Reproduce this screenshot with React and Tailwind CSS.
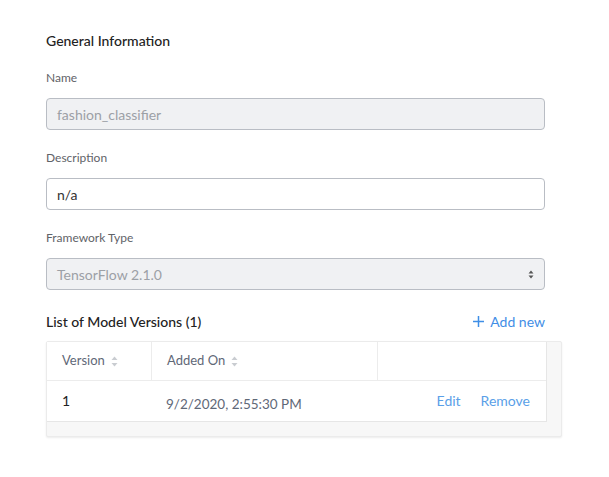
export default function App() {
  const label = "block text-[12px] text-[#5f6368] leading-[14px]";
  const box =
    "w-full h-8 rounded-[4px] border border-[#b9bdc4] px-[10px] text-[14px] flex items-center";

  const SortIcon = () => (
    <svg width="7" height="11" viewBox="0 0 7 11" className="ml-[6px]">
      <path d="M3.5 0.5 L6.5 4 H0.5 Z" fill="#c9ccd1" />
      <path d="M3.5 10.5 L6.5 7 H0.5 Z" fill="#c9ccd1" />
    </svg>
  );

  return (
    <div
      className="min-h-screen bg-white pt-[33px] pl-[46px]"
      style={{ fontFamily: "Lato, 'Open Sans', sans-serif" }}
    >
      <div className="w-[499px]">
        <h2 className="text-[14px] font-medium text-[#222] leading-4 mb-[22px]">
          General Information
        </h2>

        <label className={`${label} mb-[13px]`}>Name</label>
        <div className={`${box} bg-[#f0f1f3] text-[#9ca0a6]`}>fashion_classifier</div>

        <label className={`${label} mt-[21px] mb-[13px]`}>Description</label>
        <div className={`${box} bg-white text-[#333]`}>n/a</div>

        <label className={`${label} mt-[21px] mb-[13px]`}>Framework Type</label>
        <div className={`${box} bg-[#f0f1f3] text-[#9ca0a6] justify-between`}>
          <span>TensorFlow 2.1.0</span>
          <svg width="6" height="9" viewBox="0 0 6 9">
            <path d="M3 0.5 L5.5 3.5 H0.5 Z" fill="#555" />
            <path d="M3 8.5 L5.5 5.5 H0.5 Z" fill="#555" />
          </svg>
        </div>

        <div className="flex items-center justify-between mt-[23px] mb-[12px] h-4">
          <h2 className="text-[14px] font-medium text-[#222]">
            List of Model Versions (1)
          </h2>
          <button className="flex items-center text-[14px] text-[#3f8ee6]">
            <svg width="11" height="11" viewBox="0 0 11 11" className="mr-[6px]">
              <path d="M5.5 0 V11 M0 5.5 H11" stroke="#3f8ee6" strokeWidth="1.5" />
            </svg>
            Add new
          </button>
        </div>
      </div>

      <div className="w-[516px] bg-[#f7f7f7] border border-[#ebebeb] rounded-[2px] shadow-[0_1px_2px_rgba(0,0,0,0.08)] pr-[14px] pb-[14px]">
        <div className="bg-white border-r border-b border-[#e6e6e6]">
          <div className="flex h-[39px] border-b border-[#ececec] text-[13px] text-[#5f6877]">
            <div className="w-[105px] pl-[15px] flex items-center border-r border-[#ececec]">
              Version
              <SortIcon />
            </div>
            <div className="w-[226px] pl-[15px] flex items-center border-r border-[#ececec]">
              Added On
              <SortIcon />
            </div>
            <div className="flex-1" />
          </div>
          <div className="flex h-[40px] items-center text-[14px]">
            <div className="w-[105px] pl-[15px] pb-[1px] text-[#222]">1</div>
            <div className="w-[226px] pl-[14px] pt-[6px] text-[13.5px] text-[#5f6877]">
              9/2/2020, 2:55:30 PM
            </div>
            <div className="flex-1 flex justify-end pr-[16px] gap-[20px] text-[#5a9fe8] pb-[2px]">
              <span>Edit</span>
              <span>Remove</span>
            </div>
          </div>
        </div>
      </div>
    </div>
  );
}
